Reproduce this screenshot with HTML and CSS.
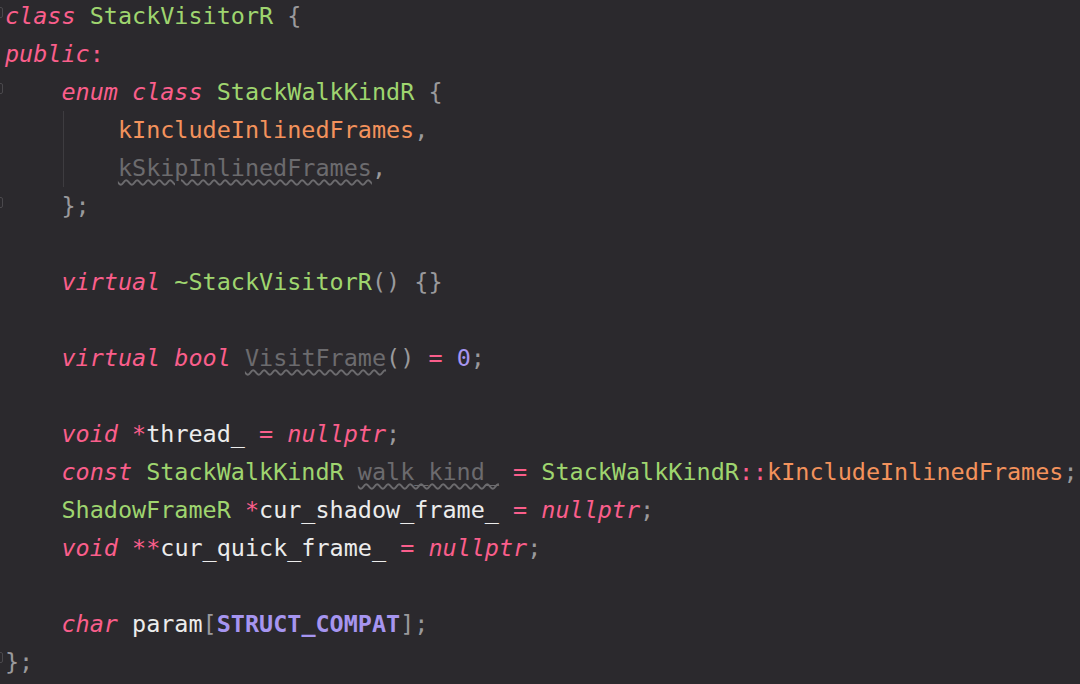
FILE: index.html
```html
<!DOCTYPE html>
<html>
<head>
<meta charset="utf-8">
<link rel="stylesheet" href="styles.css">
</head>
<body>
<div class="editor">
  <div class="gutter">
    <span class="fold f1"></span>
    <span class="fold f3"></span>
    <span class="fold f6"></span>
    <span class="fold f18"></span>
  </div>
  <pre class="code"><div class="line"><span class="kw">class</span> <span class="ty">StackVisitorR</span> <span class="pn">{</span></div><div class="line"><span class="kw">public</span><span class="kwp">:</span></div><div class="line">    <span class="kw">enum</span> <span class="kw">class</span> <span class="ty">StackWalkKindR</span> <span class="pn">{</span></div><div class="line guide">    <span class="guide-bar"></span>    <span class="en">kIncludeInlinedFrames</span><span class="pn">,</span></div><div class="line guide">    <span class="guide-bar"></span>    <span class="unused">kSkipInlinedFrames</span><span class="pn">,</span></div><div class="line">    <span class="pn">};</span></div><div class="line"> </div><div class="line">    <span class="kw">virtual</span> <span class="ty">~StackVisitorR</span><span class="pn">()</span> <span class="pn">{}</span></div><div class="line"> </div><div class="line">    <span class="kw">virtual</span> <span class="kw">bool</span> <span class="unused">VisitFrame</span><span class="pn">()</span> <span class="op">=</span> <span class="num">0</span><span class="pn">;</span></div><div class="line"> </div><div class="line">    <span class="kw">void</span> <span class="op">*</span><span class="id">thread_</span> <span class="op">=</span> <span class="kw">nullptr</span><span class="pn">;</span></div><div class="line">    <span class="kw">const</span> <span class="ty">StackWalkKindR</span> <span class="unused">walk_kind_</span> <span class="op">=</span> <span class="ty">StackWalkKindR</span><span class="op">::</span><span class="en">kIncludeInlinedFrames</span><span class="pn">;</span></div><div class="line">    <span class="ty">ShadowFrameR</span> <span class="op">*</span><span class="id">cur_shadow_frame_</span> <span class="op">=</span> <span class="kw">nullptr</span><span class="pn">;</span></div><div class="line">    <span class="kw">void</span> <span class="op">**</span><span class="id">cur_quick_frame_</span> <span class="op">=</span> <span class="kw">nullptr</span><span class="pn">;</span></div><div class="line"> </div><div class="line">    <span class="kw">char</span> <span class="id">param</span><span class="pn">[</span><span class="mac">STRUCT_COMPAT</span><span class="pn">]</span><span class="pn">;</span></div><div class="line"><span class="pn">};</span></div></pre>
</div>
</body>
</html>
```

FILE: styles.css
```css
html, body {
  margin: 0;
  padding: 0;
  background: #2b292d;
  width: 1080px;
  height: 684px;
  overflow: hidden;
}

.editor {
  position: relative;
  width: 1080px;
  height: 684px;
  background: #2b292d;
}

.gutter {
  position: absolute;
  left: 0;
  top: 0;
  width: 5px;
  height: 684px;
}

.fold {
  position: absolute;
  left: -5px;
  width: 8px;
  height: 11px;
  border: 1px solid #4a484c;
  border-radius: 2px;
  box-sizing: border-box;
}

.f1 { top: 10px; }
.f3 { top: 86px; }
.f6 { top: 200px; }
.f18 { top: 655px; }

.code {
  margin: 0;
  padding: 0 0 0 5px;
  margin-top: -3px;
  font-family: "DejaVu Sans Mono", "Liberation Mono", monospace;
  font-size: 23.45px;
  line-height: 38px;
  color: #e6e6e6;
  white-space: pre;
}

.line {
  height: 38px;
  position: relative;
}

.guide-bar {
  position: absolute;
  left: 58px;
  top: 0;
  height: 38px;
  width: 1px;
  background: #3e3c40;
}

.kw {
  color: #fa5e8b;
  font-style: italic;
}

.kwp {
  color: #fa5e8b;
}

.ty {
  color: #9fd56f;
}

.pn {
  color: #9a999c;
}

.op {
  color: #fa5e8b;
}

.en {
  color: #f3925c;
}

.num {
  color: #a695f0;
}

.mac {
  color: #a695f0;
  font-weight: bold;
}

.id {
  color: #ececec;
}

.unused {
  color: #6c6b6e;
  text-decoration: underline wavy #6c6b6e;
  text-decoration-thickness: 1.5px;
  text-underline-offset: 3px;
}
```
